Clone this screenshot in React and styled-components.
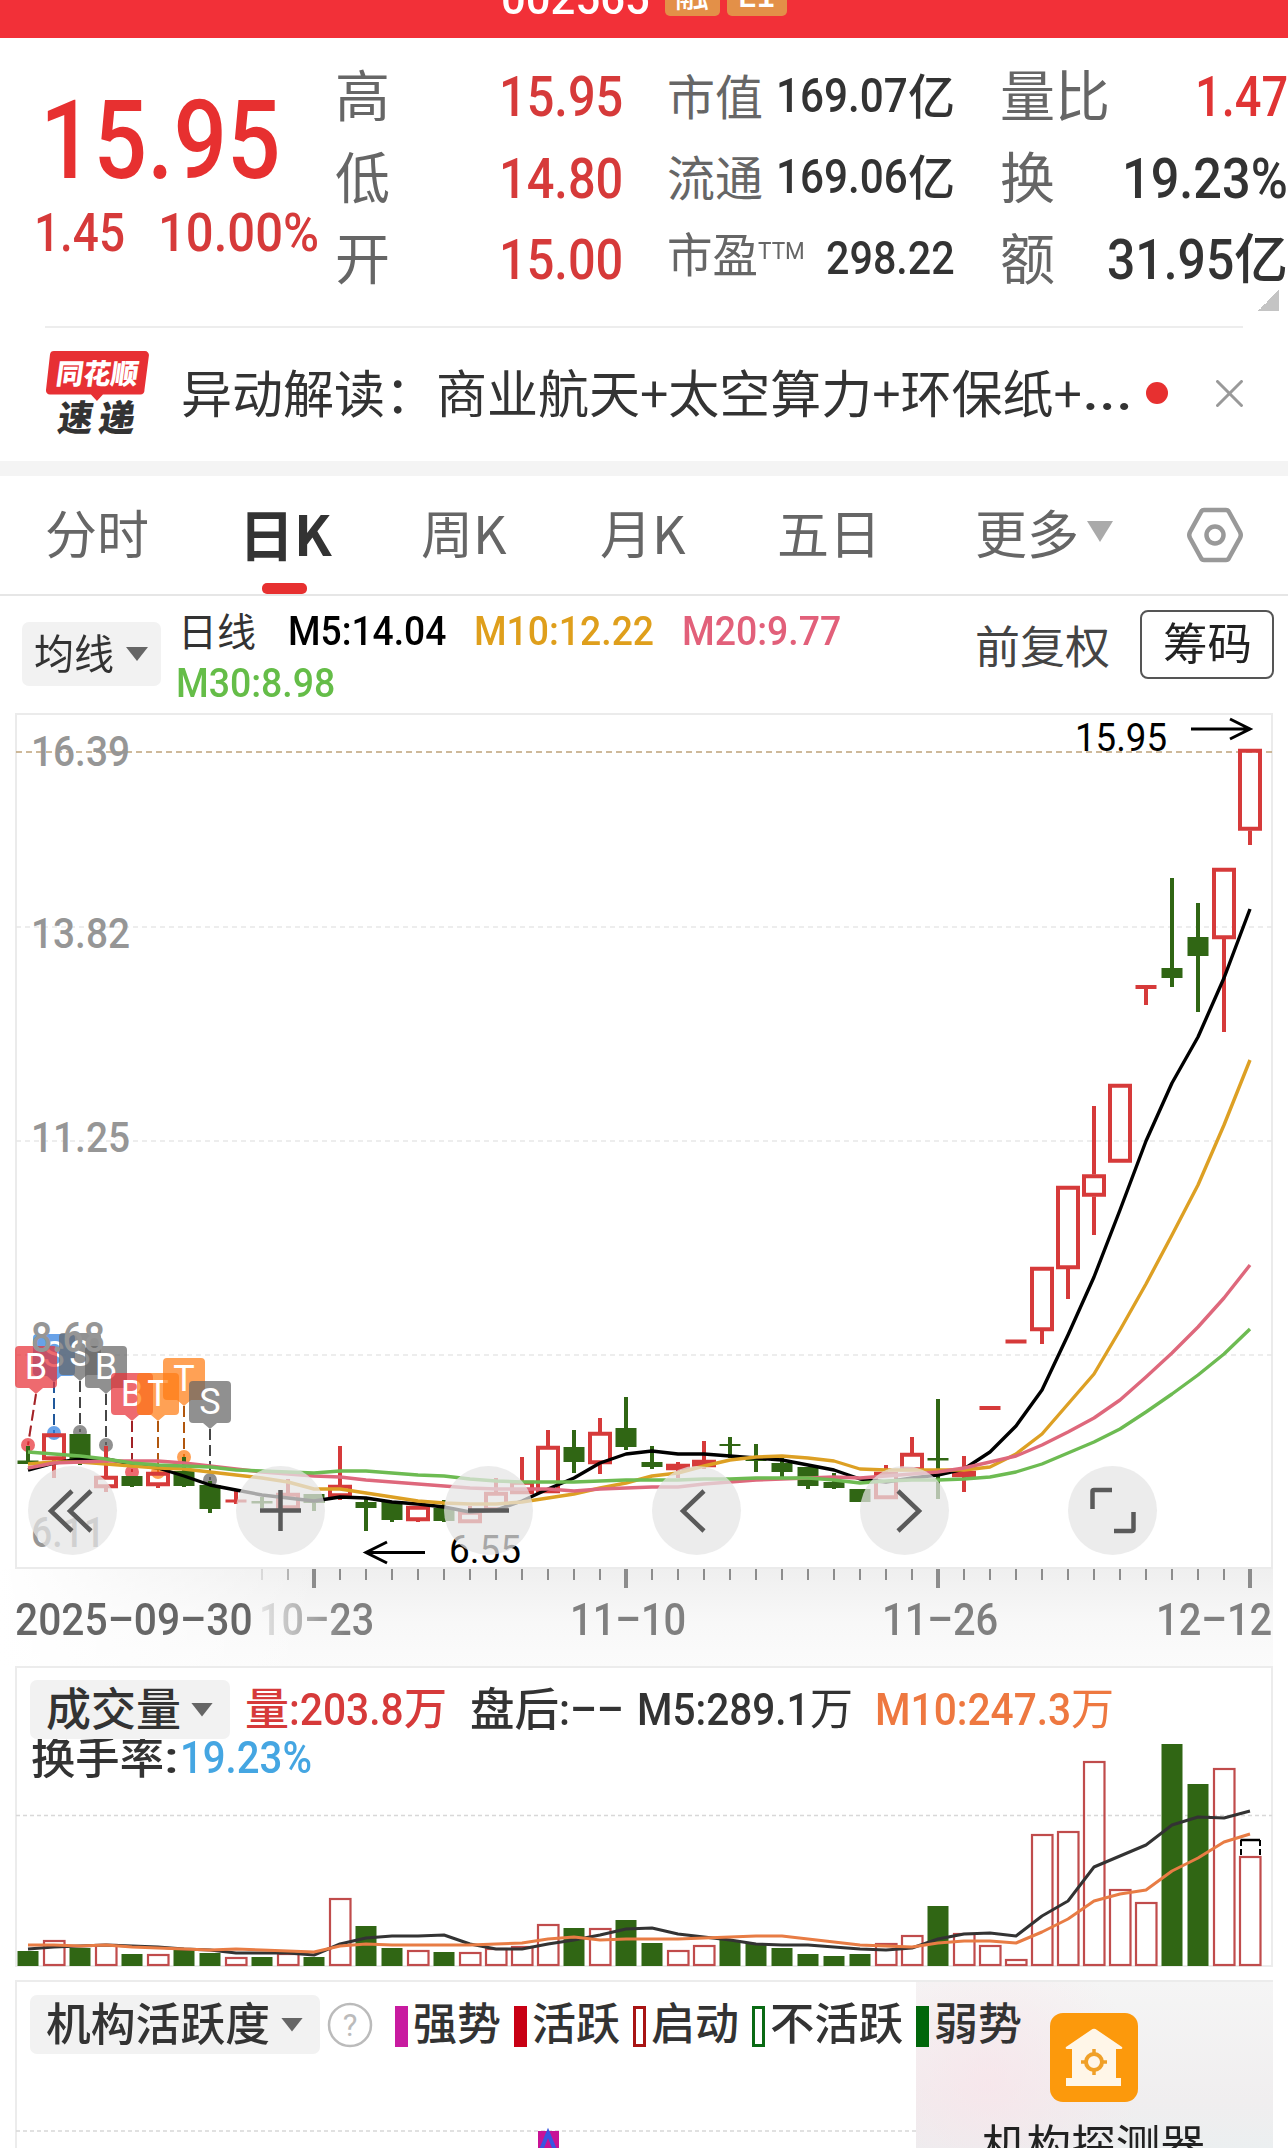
import {useLayoutEffect, useRef} from "react"
import styled, {createGlobalStyle} from "styled-components"

const CJK = `"Noto Sans CJK SC", sans-serif`
const NUM = `Roboto, "Noto Sans CJK SC", sans-serif`

const RED = "#d63a3a"
const GREEN = "#306614"
const STEP = 26
const X0 = 28

const Global = createGlobalStyle`
  * { box-sizing: border-box; }
  body { margin: 0; background: #fff; }
`

const Page = styled.div`
  position: relative;
  width: 1288px;
  height: 2148px;
  overflow: hidden;
  background: #fff;
  font-family: ${CJK};
  color: #333;
`

const FitBox = styled.span`
  display: block;
  flex: none;
  width: ${p => p.$w}px;
  margin-left: ${p => p.$ml || 0}px;
  height: ${p => p.$size * 1.2}px;
  line-height: ${p => p.$size * 1.2}px;
  font-family: ${p => (p.$cjk ? CJK : NUM)};
  font-size: ${p => p.$size}px;
  font-weight: ${p => p.$weight || 400};
  color: ${p => p.$color || "inherit"};
  white-space: nowrap;
`

const FitText = styled.span`
  display: inline-block;
  vertical-align: top;
  margin-top: ${p => (p.$cjk ? "-0.06em" : 0)};
  transform-origin: 0 50%;
`

// condensed text: squeezes its content to exactly w pixels
const Fit = ({w, ml, size, weight, color, cjk, children}) => {
  const ref = useRef(null)
  useLayoutEffect(() => {
    const el = ref.current
    el.style.transform = `scaleX(${w / el.offsetWidth})`
  }, [w, children])
  return (
    <FitBox $w={w} $ml={ml} $size={size} $weight={weight} $color={color} $cjk={cjk}>
      <FitText ref={ref} $cjk={cjk}>
        {children}
      </FitText>
    </FitBox>
  )
}

const TopBar = styled.header`
  display: flex;
  align-items: flex-end;
  height: 38px;
  padding: 0 0 22px 501px;
  background: #f23038;
  overflow: hidden;
  color: #fff;
`

const Code = styled.div`
  margin-bottom: -10px;
`

const Badge = styled.span`
  display: flex;
  flex: none;
  align-items: center;
  justify-content: center;
  width: ${p => p.$w}px;
  height: 46px;
  margin-left: ${p => p.$ml}px;
  border-radius: 5px;
  background: #e39048;
  font-size: 34px;
  font-weight: 500;
  line-height: 34px;
`

const Quote = styled.section`
  position: relative;
  display: flex;
  height: 288px;
`

const PriceBox = styled.div`
  width: 335px;
  padding: 37px 0 0 34px;
`

const Change = styled.div`
  display: flex;
  margin-top: -5px;
`

const Column = styled.div`
  display: flex;
  flex-direction: column;
  gap: 1px;
  width: ${p => p.$w}px;
  margin-left: ${p => p.$ml || 0}px;
  padding-top: 17px;
`

const Cell = styled.div`
  display: flex;
  align-items: center;
  justify-content: space-between;
  height: 80.4px;
  color: #333;
`

const Name = styled.span`
  display: flex;
  padding-bottom: ${p => (p.$size ? 3 : 6)}px;
  font-size: ${p => p.$size || 55}px;
  color: #666;
  white-space: nowrap;
`

const Value = styled.span`
  display: flex;
  align-items: center;
  padding-top: ${p => p.$drop || 0}px;
`

const Sup = styled.span`
  margin-top: 10px;
`

const Corner = styled.i`
  position: absolute;
  right: 9px;
  bottom: 15px;
  width: 21px;
  height: 21px;
  background: linear-gradient(135deg, transparent 50%, #c4c4c4 50%);
`

const News = styled.section`
  display: flex;
  align-items: center;
  height: 135px;
  margin: 0 45px;
  padding-bottom: 3px;
  border-top: 2px solid #ededed;
`

const Headline = styled.div`
  display: flex;
  align-items: center;
  width: 966px;
  margin-left: 32px;
  padding-bottom: 5px;
  font-size: 51px;
  line-height: 60px;
  white-space: nowrap;
`

const Dot = styled.i`
  width: 22px;
  height: 22px;
  margin-right: 48px;
  border-radius: 50%;
  background: #e73030;
`

const Band = styled.div`
  height: 15px;
  background: #f4f4f4;
`

const Tabs = styled.nav`
  display: flex;
  align-items: center;
  height: 120px;
  padding-left: 45px;
  border-bottom: 2px solid #e6e6e6;
`

const Tab = styled.div`
  position: relative;
  display: flex;
  align-items: center;
  width: ${p => p.$w}px;
  height: 118px;
  padding-bottom: 7px;
  font-size: ${p => (p.$on ? 55 : 52)}px;
  font-weight: ${p => (p.$on ? 700 : 400)};
  color: ${p => (p.$on ? "#333" : "#666")};
  &::after {
    content: "";
    display: ${p => (p.$on ? "block" : "none")};
    position: absolute;
    left: 23px;
    bottom: 0;
    width: 45px;
    height: 11px;
    border-radius: 5px;
    background: #e73030;
  }
`

const Arrow = styled.i`
  flex: none;
  width: ${p => p.$w || 22}px;
  height: ${p => p.$h || 14}px;
  margin-left: ${p => p.$ml || 12}px;
  background: ${p => p.$color || "#666"};
  clip-path: polygon(0 0, 100% 0, 50% 100%);
`

const MaRow = styled.section`
  display: flex;
  height: 117px;
  padding-left: 22px;
`

const Picker = styled.button`
  display: flex;
  flex: none;
  align-items: center;
  width: ${p => p.$w}px;
  height: ${p => p.$h || 59}px;
  margin-top: ${p => p.$mt || 0}px;
  padding: 0 0 0 ${p => p.$pl || 16}px;
  border: 0;
  border-radius: 7px;
  background: #f2f2f2;
  color: #333;
`

const MaValues = styled.div`
  flex: none;
  width: 814px;
  padding: 11px 0 0 17px;
`

const Line = styled.div`
  display: flex;
  align-items: center;
  height: ${p => p.$h || 48}px;
`

const Adjust = styled.div`
  margin: 25px 30px 0 0;
`

const Chips = styled.button`
  display: flex;
  align-items: center;
  justify-content: center;
  width: 134px;
  height: 69px;
  margin-top: 14px;
  padding: 0;
  border: 2px solid #555;
  border-radius: 8px;
  background: #fff;
  color: #222;
`

const ChartArea = styled.section`
  position: relative;
  height: 856px;
  svg {
    display: block;
  }
`

const Controls = styled.div`
  position: absolute;
  left: 28px;
  top: 753px;
  display: flex;
  justify-content: space-between;
  width: 1129px;
`

const Round = styled.button`
  width: 89px;
  height: 89px;
  padding: 0;
  border: 0;
  border-radius: 50%;
  background: rgba(229, 229, 229, 0.73);
`

const Axis = styled.section`
  height: 97px;
  width: 1273px;
  background:
    linear-gradient(90deg, #fff 0, rgba(255, 255, 255, 0) 320px),
    linear-gradient(#efefef, #f8f8f8 55%, #fbfbfb);
  svg {
    display: block;
  }
`

const Dates = styled.div`
  display: flex;
  margin-top: 3px;
  padding-left: 15px;
`

const Fade = styled.span`
  display: block;
  margin-left: 6px;
  -webkit-mask-image: linear-gradient(90deg, rgba(0, 0, 0, 0.15), #000 75%);
  mask-image: linear-gradient(90deg, rgba(0, 0, 0, 0.15), #000 75%);
`

const Panel = styled.section`
  position: relative;
  width: 1258px;
  height: ${p => p.$h}px;
  margin: 0 0 ${p => p.$mb || 0}px 15px;
  border: 2px solid #ececec;
  border-bottom-width: ${p => (p.$open ? 0 : 2)}px;
`

const PanelHead = styled.div`
  position: relative;
  z-index: 1;
  display: flex;
  align-items: center;
  height: 59px;
  margin: ${p => p.$mt}px 0 0 13px;
`

const Turnover = styled.div`
  position: relative;
  display: flex;
  align-items: center;
  height: 42px;
  margin: -2px 0 0 14px;
`

const Plot = styled.svg`
  position: absolute;
  left: -17px;
  top: -2px;
`

const Swatch = styled.i`
  flex: none;
  width: 13px;
  height: 41px;
  margin: 3px 5px 0 ${p => p.$ml}px;
  border: 3px solid ${p => p.$color};
  background: ${p => (p.$hollow ? "#fff" : p.$color)};
`

const Help = styled.svg`
  flex: none;
  margin: 0 22px 0 7px;
`

const Probe = styled.aside`
  position: absolute;
  right: -2px;
  top: 0;
  display: flex;
  flex-direction: column;
  align-items: flex-end;
  width: 357px;
  height: 170px;
  padding-top: 31px;
  background:
    radial-gradient(circle at 20% 60%, rgba(250, 225, 232, 0.6), transparent 50%),
    linear-gradient(#f5f5f5, #f0eeef 70%, #ebeff0);
  svg {
    flex: none;
    margin-right: 135px;
  }
`

const ProbeName = styled.div`
  margin: 18px 68px 0 0;
`

// [kind, top, bottom, high, low]; r = hollow red, g = solid green
const candles = [
  ["g", 1459.5, 1463, 1445, 1463],
  ["r", 1432.5, 1459, 1432.5, 1477],
  ["g", 1433, 1458, 1433, 1464],
  ["r", 1475, 1487, 1445, 1491],
  ["g", 1475, 1485, 1475, 1486],
  ["r", 1471, 1485, 1471, 1487],
  ["g", 1470, 1485, 1456, 1486],
  ["g", 1484, 1508, 1480, 1512],
  ["r", 1498.5, 1501.5, 1490, 1503],
  ["g", 1500, 1502.5, 1496, 1507],
  ["r", 1492, 1508, 1478, 1508],
  ["g", 1493, 1502, 1493, 1510],
  ["r", 1484, 1496, 1445, 1499],
  ["g", 1501, 1507, 1497, 1530],
  ["g", 1500, 1519, 1500, 1521],
  ["r", 1505, 1520, 1505, 1521],
  ["g", 1507, 1520, 1499, 1521],
  ["r", 1510, 1522, 1505, 1522],
  ["r", 1491, 1510, 1477, 1510],
  ["r", 1480, 1493, 1456, 1493],
  ["r", 1445, 1492, 1429, 1492],
  ["g", 1446, 1461, 1429, 1472],
  ["r", 1431, 1463, 1417, 1473],
  ["g", 1427, 1446, 1396, 1449],
  ["g", 1461, 1466, 1445, 1468],
  ["r", 1463, 1469, 1461, 1477],
  ["r", 1459, 1466, 1440, 1468],
  ["g", 1443, 1445, 1436, 1457],
  ["g", 1457, 1460, 1443, 1471],
  ["g", 1462, 1471, 1456, 1476],
  ["g", 1466, 1485, 1466, 1488],
  ["g", 1481, 1487, 1472, 1488],
  ["g", 1488, 1501, 1488, 1501],
  ["r", 1471, 1498, 1464, 1498],
  ["r", 1452, 1470, 1436, 1470],
  ["g", 1457, 1459.5, 1398, 1498],
  ["r", 1470, 1476, 1455, 1491],
  ["r", 1405, 1409, 1405, 1409],
  ["r", 1338.5, 1342.5, 1338.5, 1342.5],
  ["r", 1266, 1330, 1266, 1343],
  ["r", 1185, 1268, 1185, 1298],
  ["r", 1173.5, 1195.5, 1105, 1234],
  ["r", 1083, 1161.5, 1083, 1161.5],
  ["r", 984, 988, 984, 1004],
  ["g", 967, 977, 877, 986],
  ["g", 936, 955, 902, 1011],
  ["r", 867, 938, 867, 1031],
  ["r", 748, 829.5, 748, 844],
]

const ma = {
  "#000": [
    1469, 1462, 1458, 1458, 1463, 1467, 1475, 1484, 1489, 1494, 1497, 1500, 1496, 1497, 1501, 1503,
    1506, 1511, 1509, 1500, 1488, 1477, 1462, 1453, 1450, 1453, 1453, 1455, 1457, 1459, 1464, 1469,
    1478, 1481, 1477, 1474, 1468, 1451, 1425, 1389, 1334, 1276, 1209, 1140, 1082, 1036, 977, 908,
  ],
  "#dda024": [
    1463, 1461, 1461, 1463, 1465, 1467, 1468, 1471, 1474, 1477, 1481, 1488, 1488, 1492, 1496, 1500,
    1502, 1503, 1503, 1501, 1497, 1493, 1487, 1482, 1475, 1472, 1465, 1459, 1456, 1455, 1457, 1460,
    1468, 1469, 1469, 1469, 1469, 1466, 1453, 1433, 1403, 1373, 1329, 1283, 1234, 1184, 1124, 1059,
  ],
  "#de687c": [
    1467, 1462, 1461, 1460, 1460, 1460, 1462, 1465, 1468, 1471, 1473, 1475, 1476, 1479, 1481, 1483,
    1485, 1487, 1488, 1488, 1488, 1490, 1488, 1487, 1486, 1486, 1483, 1481, 1479, 1478, 1477, 1476,
    1477, 1475, 1473, 1471, 1467, 1461, 1455, 1444, 1431, 1417, 1399, 1376, 1352, 1326, 1297, 1264,
  ],
  "#6dbb52": [
    1451, 1453, 1455, 1458, 1462, 1464, 1465, 1466, 1469, 1470, 1471, 1472, 1470, 1470, 1472, 1474,
    1475, 1478, 1480, 1481, 1481, 1481, 1480, 1479, 1479, 1479, 1478, 1478, 1477, 1477, 1477, 1479,
    1482, 1480, 1479, 1479, 1478, 1476, 1471, 1463, 1452, 1441, 1428, 1411, 1393, 1374, 1353, 1328,
  ],
}

const volumes = [
  1950, 1940, 1947, 1944, 1953, 1954, 1949, 1952, 1957, 1956, 1953, 1956, 1898, 1925, 1947, 1950,
  1951, 1952, 1948, 1946, 1924, 1927, 1928, 1919, 1942, 1950, 1945, 1939, 1942, 1947, 1953, 1955,
  1953, 1943, 1935, 1905, 1933, 1945, 1959, 1834, 1831, 1761, 1889, 1902, 1743, 1783, 1768, 1856,
]

const volMa = {
  "#333": [
    1948, 1946, 1945, 1944, 1945, 1946, 1948, 1949, 1952, 1952, 1952, 1954, 1943, 1937, 1935, 1935,
    1934, 1943, 1948, 1948, 1943, 1939, 1934, 1928, 1927, 1933, 1936, 1939, 1943, 1944, 1944, 1946,
    1948, 1949, 1947, 1938, 1933, 1932, 1935, 1915, 1900, 1866, 1855, 1844, 1824, 1816, 1817, 1810,
  ],
  "#e87c44": [
    1944, 1944, 1945, 1944, 1946, 1947, 1948, 1949, 1948, 1949, 1950, 1951, 1945, 1943, 1944, 1944,
    1944, 1944, 1943, 1942, 1938, 1936, 1939, 1938, 1938, 1938, 1937, 1936, 1935, 1935, 1938, 1941,
    1944, 1945, 1946, 1942, 1940, 1940, 1942, 1931, 1918, 1900, 1893, 1889, 1870, 1857, 1841, 1833,
  ],
}

const RF = "#e83238"
const BF = "#2f7fe0"
const KF = "#666"
const OF = "#ff7d14"

// [letter, x, top, color, dot x]
const flags = [
  ["S", 54, 1333, BF, 54],
  ["S", 80, 1332, KF, 80],
  ["B", 106, 1345, KF, 106],
  ["B", 36, 1345, RF, 28],
  ["B", 132, 1372, RF, 132],
  ["T", 158, 1372, OF, 158],
  ["T", 184, 1357, OF, 184],
  ["S", 210, 1380, KF, 210],
]

const cx = i => X0 + i * STEP

const Curve = ({data, color, width = 3}) => (
  <polyline
    points={data.map((y, i) => `${cx(i)},${y}`).join(" ")}
    fill="none"
    stroke={color}
    strokeWidth={width}
    strokeLinejoin="round"
  />
)

const Candle = ({i, d: [kind, top, bottom, high, low]}) => {
  const x = cx(i)
  const thin = bottom - top < 5
  if (kind === "g" || thin) {
    const c = kind === "g" ? GREEN : RED
    return (
      <g fill={c}>
        <rect x={x - 10.5} y={top} width={21} height={bottom - top} />
        {low - high > bottom - top && <rect x={x - 2} y={high} width={4} height={low - high} />}
      </g>
    )
  }
  return (
    <g fill={RED}>
      {top > high && <rect x={x - 2} y={high} width={4} height={top - high} />}
      {low > bottom && <rect x={x - 2} y={bottom} width={4} height={low - bottom} />}
      <rect
        x={x - 10}
        y={top + 1.75}
        width={20}
        height={bottom - top - 3.5}
        fill="none"
        stroke={RED}
        strokeWidth={4}
      />
    </g>
  )
}

const Flag = ({d: [letter, x, y, color, dx]}) => (
  <g>
    <path d={`M${x} ${y + 48}L${dx} ${y + 99}`} stroke={color} strokeWidth="2" strokeDasharray="11 5" />
    <path d={`M${x} ${y + 48}L${dx} ${y + 99}`} stroke="#000" opacity=".3" strokeWidth="2" strokeDasharray="11 5" />
    <g fill={color} opacity=".72">
      <circle cx={dx} cy={y + 99} r="7" />
      <path
        d={`M${x - 17} ${y}h34a4 4 0 0 1 4 4v34a4 4 0 0 1 -4 4h-10l-7 6l-7 -6h-10a4 4 0 0 1 -4 -4v-34a4 4 0 0 1 4 -4z`}
      />
    </g>
    <text x={x} y={y + 33} fill="#fff" fontSize="36" textAnchor="middle" fontFamily={NUM}>
      {letter}
    </text>
  </g>
)

const yLabels = [
  ["16.39", 765],
  ["13.82", 947],
  ["11.25", 1151],
  ["8.68", 1351],
  ["6.11", 1546],
]

const KChart = () => (
  <svg width="1288" height="856" viewBox="0 712 1288 856">
    <rect x="16" y="713" width="1256" height="854" fill="none" stroke="#ebebeb" strokeWidth="2" />
    <path d="M16 751H1272" stroke="#bfa27a" strokeWidth="1.6" strokeDasharray="6 4" />
    <path d="M16 926H1272M16 1140H1272M16 1354H1272" stroke="#e8e8e8" strokeWidth="1.6" strokeDasharray="5 4" />
    {flags.map((d, i) => (
      <Flag key={i} d={d} />
    ))}
    {yLabels.map(([t, y]) => (
      <text
        key={t}
        x="31"
        y={y}
        fill="#969696"
        fontSize="43"
        fontWeight="500"
        fontFamily={NUM}
        textLength={t.length > 4 ? 99 : 74}
        lengthAdjust="spacingAndGlyphs"
      >
        {t}
      </text>
    ))}
    {candles.map((d, i) => (
      <Candle key={i} i={i} d={d} />
    ))}
    {Object.entries(ma).map(([c, data]) => (
      <Curve key={c} color={c} data={data} width={3.4} />
    ))}
    <g fill="none" stroke="#000" strokeWidth="3">
      <path d="M1191 728H1249M1230 718L1250 728L1230 738" />
      <path d="M425 1551.5H367M387 1541L366 1551.5L387 1562" />
    </g>
    <g fontFamily={NUM} fontSize="38" fill="#000">
      <text x="1075" y="750" textLength="92" lengthAdjust="spacingAndGlyphs">
        15.95
      </text>
      <text x="449" y="1562" textLength="72" lengthAdjust="spacingAndGlyphs">
        6.55
      </text>
    </g>
  </svg>
)

const controls = [
  "M44 25L23 45L44 65M63 25L42 45L63 65",
  "M24 44.5H65M44.5 24V65",
  "M24 44.5H65",
  "M52 25L31 45L52 65",
  "M38 25L59 45L38 65",
  "M24.5 43V25.5Q24.5 24 26 24H44M65.5 46V63.5Q65.5 65 64 65H46",
]

const ticks = Array.from({length: 39}, (d, i) => i + 9)

const VolumeChart = () => (
  <Plot width="1288" height="301" viewBox="0 1665 1288 301">
    <path d="M16 1814.5H1272" stroke="#d8d8d8" strokeWidth="1.4" strokeDasharray="4 3" />
    {volumes.map((y, i) => {
      const g = candles[i][0] === "g"
      return g ? (
        <rect key={i} x={cx(i) - 10.5} y={y} width={21} height={1965 - y} fill={GREEN} />
      ) : (
        <rect
          key={i}
          x={cx(i) - 10}
          y={y}
          width={20.5}
          height={1964 - y}
          fill="none"
          stroke="#c04c4c"
          strokeWidth={2.2}
        />
      )
    })}
    {Object.entries(volMa).map(([c, data]) => (
      <Curve key={c} color={c} data={data} />
    ))}
    <path d="M1240.5 1839H1260" stroke="#000" strokeWidth="2.5" />
    <path d="M1241 1839V1856M1260 1839V1856" stroke="#000" strokeWidth="2" strokeDasharray="6 3" />
  </Plot>
)

const legend = [
  ["强势", "#c81ba0", false, 88],
  ["活跃", "#c80014", false, 88],
  ["启动", "#a81414", true, 88],
  ["不活跃", "#0a6a14", true, 133],
  ["弱势", "#00660a", false, 88],
]

const Logo = () => (
  <svg width="104" height="88" viewBox="0 0 104 88">
    <path
      d="M9 2H100a4 4 0 0 1 4 4.5L99.5 41a4 4 0 0 1 -4 4.5H58L52 52L46 45.5H5a4 4 0 0 1 -4 -4.5L5 5.500A4 4 0 0 1 9 2z"
      fill="#e73034"
    />
    <g transform="skewX(-8)" fontFamily={CJK} fontWeight="900">
      <text x="15" y="35" fontSize="28" fill="#fff" textLength="82" lengthAdjust="spacingAndGlyphs">
        同花顺
      </text>
      <text x="23" y="82" fontSize="36" fill="#333" textLength="35" lengthAdjust="spacingAndGlyphs">
        速
      </text>
      <text x="64" y="82" fontSize="36" fill="#333" textLength="36" lengthAdjust="spacingAndGlyphs">
        递
      </text>
    </g>
  </svg>
)

export default function App() {
  return (
    <Page>
      <Global />
      <TopBar>
        <Code>
          <Fit w={149} size={46} weight={500}>
            002565
          </Fit>
        </Code>
        <Badge $w={55} $ml={14.5}>
          融
        </Badge>
        <Badge $w={60} $ml={7}>
          L1
        </Badge>
      </TopBar>

      <Quote>
        <PriceBox>
          <Fit w={241} ml={6} size={110} weight={500} color="#e73030">
            15.95
          </Fit>
          <Change>
            <Fit w={91} size={53} weight={500} color={RED}>
              1.45
            </Fit>
            <Fit w={161} ml={33} size={53} weight={500} color={RED}>
              10.00%
            </Fit>
          </Change>
        </PriceBox>
        <Column $w={288}>
          {[
            ["高", "15.95"],
            ["低", "14.80"],
            ["开", "15.00"],
          ].map(([name, v]) => (
            <Cell key={name}>
              <Name>{name}</Name>
              <Value $drop={4}>
                <Fit w={124} size={55} weight={500} color={RED}>
                  {v}
                </Fit>
              </Value>
            </Cell>
          ))}
        </Column>
        <Column $w={288} $ml={44}>
          {[
            ["市值", "169.07"],
            ["流通", "169.06"],
          ].map(([name, v]) => (
            <Cell key={name}>
              <Name $size={48}>{name}</Name>
              <Value $drop={2}>
                <Fit w={132} size={49} weight={500}>
                  {v}
                </Fit>
                <Fit w={47} size={48} weight={500} cjk>
                  亿
                </Fit>
              </Value>
            </Cell>
          ))}
          <Cell>
            <Name>
              <Fit w={91} size={47} cjk>
                市盈
              </Fit>
              <Sup>
                <Fit w={47} size={24}>
                  TTM
                </Fit>
              </Sup>
            </Name>
            <Value>
              <Fit w={129} size={47} weight={500}>
                298.22
              </Fit>
            </Value>
          </Cell>
        </Column>
        <Column $w={288} $ml={45}>
          <Cell>
            <Name>量比</Name>
            <Value $drop={4}>
              <Fit w={93} size={55} weight={500} color="#e03434">
                1.47
              </Fit>
            </Value>
          </Cell>
          <Cell>
            <Name>换</Name>
            <Value $drop={4}>
              <Fit w={166} size={55} weight={500}>
                19.23%
              </Fit>
            </Value>
          </Cell>
          <Cell>
            <Name>额</Name>
            <Value $drop={4}>
              <Fit w={127} size={55} weight={500}>
                31.95
              </Fit>
              <Fit w={54} size={54} weight={500} cjk>
                亿
              </Fit>
            </Value>
          </Cell>
        </Column>
        <Corner />
      </Quote>

      <News>
        <Logo />
        <Headline>
          异动解读：商业航天+太空算力+环保纸+
          <Fit w={51} size={51} cjk>
            ...
          </Fit>
        </Headline>
        <Dot />
        <svg width="27" height="27" viewBox="0 0 27 27">
          <path d="M1.500 1.500L25.500 25.500M25.500 1.500L1.500 25.500" stroke="#999" strokeWidth="3" strokeLinecap="round" />
        </svg>
      </News>
      <Band />

      <Tabs>
        <Tab $w={194}>分时</Tab>
        <Tab $w={182} $on>
          日K
        </Tab>
        <Tab $w={179}>周K</Tab>
        <Tab $w={177}>月K</Tab>
        <Tab $w={198}>五日</Tab>
        <Tab $w={211}>
          更多
          <Arrow $w={26} $h={21} $ml={8} $color="#aaa" />
        </Tab>
        <svg width="58" height="56" viewBox="0 0 58 56">
          <path
            d="M18 3H40Q42 3 43 5L54 25Q55.500 28 54 31L43 51Q42 53 40 53H18Q16 53 15 51L4 31Q2.500 28 4 25L15 5Q16 3 18 3Z"
            fill="none"
            stroke="#999"
            strokeWidth="4.5"
          />
          <circle cx="29" cy="28" r="8.5" fill="none" stroke="#999" strokeWidth="4.5" />
        </svg>
      </Tabs>

      <MaRow>
        <Picker $w={139} $h={64} $mt={26} $pl={12}>
          <Fit w={80} size={41} cjk>
            均线
          </Fit>
          <Arrow />
        </Picker>
        <MaValues>
          <Line $h={50}>
            <Fit w={78} size={39} weight={400} cjk>
              日线
            </Fit>
            <Fit w={158} ml={32} size={40} weight={500} color="#000">
              M5:14.04
            </Fit>
            <Fit w={180} ml={28} size={40} weight={500} color="#df9f1c">
              M10:12.22
            </Fit>
            <Fit w={159} ml={28} size={40} weight={500} color="#e2607a">
              M20:9.77
            </Fit>
          </Line>
          <Line $h={53}>
            <Fit w={159} ml={-2} size={40} weight={500} color="#65bd48">
              M30:8.98
            </Fit>
          </Line>
        </MaValues>
        <Adjust>
          <Fit w={135} size={45} color="#444" cjk>
            前复权
          </Fit>
        </Adjust>
        <Chips>
          <Fit w={89} size={44} cjk>
            筹码
          </Fit>
        </Chips>
      </MaRow>

      <ChartArea>
        <KChart />
        <Controls>
          {controls.map(d => (
            <Round key={d}>
              <svg width="89" height="89" viewBox="0 0 89 89">
                <path d={d} fill="none" stroke="#5a5a5a" strokeWidth="4.5" />
              </svg>
            </Round>
          ))}
        </Controls>
      </ChartArea>

      <Axis>
        <svg width="1273" height="22" viewBox="0 0 1273 22">
          {ticks.map(i => {
            const big = i % 12 === 11
            return (
              <rect
                key={i}
                x={cx(i) - (big ? 2 : 1)}
                y="0"
                width={big ? 4 : 2}
                height={big ? 19 : 11}
                fill="#8c8c8c"
                opacity={i < 10 ? 0.25 : i < 11 ? 0.6 : 1}
              />
            )
          })}
        </svg>
        <Dates>
          <Fit w={238} size={44} weight={500} color="#666">
            2025–09–30
          </Fit>
          <Fade>
            <Fit w={115} size={44} weight={500} color="#808080">
              10–23
            </Fit>
          </Fade>
          <Fit w={116} ml={196} size={44} weight={500} color="#808080">
            11–10
          </Fit>
          <Fit w={116} ml={196} size={44} weight={500} color="#808080">
            11–26
          </Fit>
          <Fit w={116} ml={158} size={44} weight={500} color="#808080">
            12–12
          </Fit>
        </Dates>
      </Axis>

      <Panel $h={301} $mb={13}>
        <VolumeChart />
        <PanelHead $mt={12}>
          <Picker $w={200}>
            <Fit w={135} size={45} weight={500} cjk>
              成交量
            </Fit>
            <Arrow $ml={10} />
          </Picker>
          <Fit w={44} ml={15} size={44} weight={500} color={RED} cjk>
            量
          </Fit>
          <Fit w={115} size={45} weight={500} color={RED}>
            :203.8
          </Fit>
          <Fit w={43} size={44} weight={500} color={RED} cjk>
            万
          </Fit>
          <Fit w={89} ml={23} size={45} weight={500} cjk>
            盘后
          </Fit>
          <Fit w={65} size={45} weight={500}>
            :––
          </Fit>
          <Fit w={173} ml={13} size={45} weight={500}>
            M5:289.1
          </Fit>
          <Fit w={43} size={44} weight={400} cjk>
            万
          </Fit>
          <Fit w={196} ml={22} size={45} weight={500} color="#ee7840">
            M10:247.3
          </Fit>
          <Fit w={43} size={44} weight={400} color="#ee7840" cjk>
            万
          </Fit>
        </PanelHead>
        <Turnover>
          <Fit w={133} size={44} weight={500} cjk>
            换手率
          </Fit>
          <Fit w={15} size={45} weight={500}>
            :
          </Fit>
          <Fit w={132} ml={1} size={45} weight={500} color="#45a6e2">
            19.23%
          </Fit>
        </Turnover>
      </Panel>

      <Panel $h={169} $open>
        <Plot width="920" height="169" viewBox="0 1979 920 169">
          <path d="M16 2130H916" stroke="#d8d8d8" strokeWidth="1.4" strokeDasharray="4 3" />
          <rect x="538" y="2130" width="21" height="18" fill="#c81396" />
          <path d="M541 2149L548 2132L555 2149" fill="none" stroke="#3a55e0" strokeWidth="4" />
        </Plot>
        <Probe>
          <svg width="88" height="89" viewBox="0 0 88 89">
            <rect width="88" height="89" rx="13" fill="#fc990c" />
            <path
              d="M41 17Q44 14.500 47 17L72 34Q73 36 71 36H66V65H71V73H16V65H22V36H17Q15 36 16 34Z"
              fill="#fff6e8"
            />
            <circle cx="44" cy="49" r="8" fill="none" stroke="#f0a028" strokeWidth="4" />
            <path d="M44 36V41M44 57V62M31 49H36M52 49H57" stroke="#f0a028" strokeWidth="3.5" />
          </svg>
          <ProbeName>
            <Fit w={223} size={44} color="#222" cjk>
              机构探测器
            </Fit>
          </ProbeName>
        </Probe>
        <PanelHead $mt={13}>
          <Picker $w={290}>
            <Fit w={224} size={45} weight={500} cjk>
              机构活跃度
            </Fit>
            <Arrow $ml={11} />
          </Picker>
          <Help width="46" height="46" viewBox="0 0 46 46">
            <circle cx="23" cy="23" r="21" fill="none" stroke="#bbb" strokeWidth="2.5" />
            <text x="23" y="34" textAnchor="middle" fontSize="31" fill="#bbb" fontFamily={NUM}>
              ?
            </text>
          </Help>
          {legend.map(([name, color, hollow, w], i) => [
            <Swatch key={color} $color={color} $hollow={hollow} $ml={i ? 13 : 0} />,
            <Fit key={name} w={w} size={44} weight={500} cjk>
              {name}
            </Fit>,
          ])}
        </PanelHead>
      </Panel>
    </Page>
  )
}
